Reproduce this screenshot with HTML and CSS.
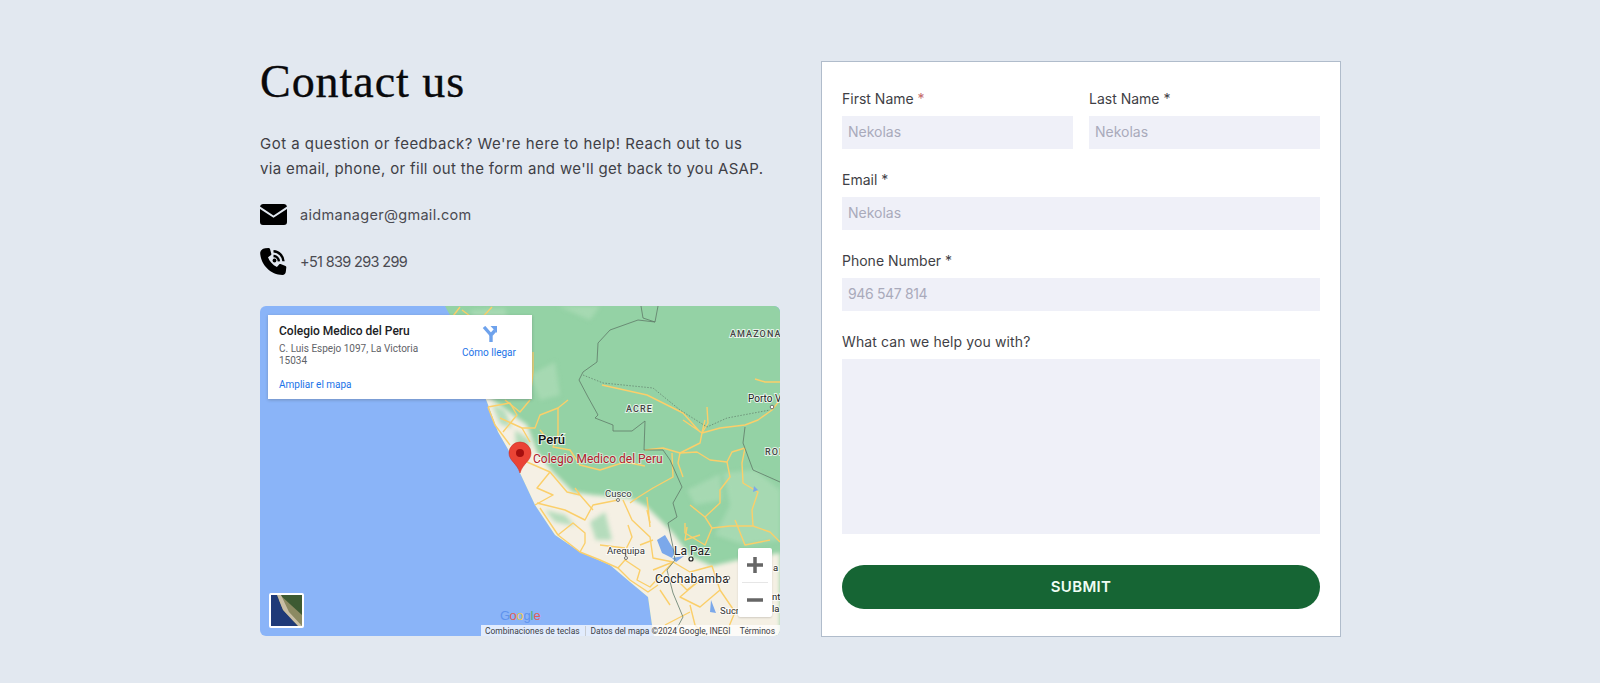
FILE: index.html
```html
<!DOCTYPE html>
<html lang="en">
<head>
<meta charset="utf-8">
<title>Contact us</title>
<link rel="stylesheet" href="styles.css">
</head>
<body>
<main class="page">
  <section class="info">
    <h1 class="title">Contact us</h1>
    <p class="lead"><span class="lead-first">Got a question or feedback? We're here to help! Reach out to us</span><br>via email, phone, or fill out the form and we'll get back to you ASAP.</p>
    <div class="contact">
      <svg class="contact-icon" viewBox="0 0 27 21"><path d="M3 0h21a3 3 0 0 1 3 2.500L13.500 11.500 0 2.500A3 3 0 0 1 3 0z"/><path d="M0 5 13.500 13.800 27 5V18a3 3 0 0 1-3 3H3a3 3 0 0 1-3-3z"/></svg>
      <span class="email">aidmanager@gmail.com</span>
    </div>
    <div class="contact">
      <svg class="contact-icon phone" viewBox="0 0 27 27"><path d="M5.200 0.300 8.600 0c.7 0 1.200.4 1.400 1l1.300 4.800c.2.600 0 1.100-.5 1.500L8 9.300c1.400 4 4.600 7.600 8.900 9.800l2.200-2.700c.4-.5 1-.6 1.500-.4l4.900 2c.6.2.9.8.8 1.400l-.5 4.400C25.700 25.400 24.300 27 22.500 27 10.500 26.600 1 17 .2 5.500 .1 2.800 2.400.6 5.200.3z"/><path class="wave" d="M13.500 3.300c5.500.2 9.700 4.600 10 10M13.500 8c3 .1 5.200 2.500 5.400 5.400"/><circle cx="14.500" cy="12.500" r="1.900"/></svg>
      <span class="tel">+51 839 293 299</span>
    </div>
    <div class="map">
      <svg class="map-art" viewBox="260 306 520 330" preserveAspectRatio="none">
        <defs>
          <clipPath id="land-clip"><path d="M445 306 458 330 470 362 487 402 498 432 517 465 520 473 535 505 555 535 580 552 610 565 630 582 648 597 652 625 654 636H780V306z"/></clipPath>
        </defs>
        <rect class="ocean" x="260" y="306" width="520" height="330"/>
        <path class="land" d="M445 306 458 330 470 362 487 402 498 432 517 465 520 473 535 505 555 535 580 552 610 565 630 582 648 597 652 625 654 636H780V306z"/>
        <g clip-path="url(#land-clip)">
          <path class="pale soft" d="M470 310 505 308 510 330 490 345 478 330zM558 306 590 320 600 306zM530 375 555 362 560 395 540 400zM687 490 720 474 722 500 695 505zM723 473 755 470 780 490V540L745 545 715 535 730 505z"/>
          <path class="sand soft" d="M470 382 490 398 513 415 527 425 537 452 553 472 573 492 593 495 630 498 647 507 673 533 690 556 712 566 738 560 780 553V640H640L600 600 500 470z"/>
          <path class="mottle soft" d="M492 404 505 410 512 428 500 424zM515 430 530 440 528 452 516 446zM545 510 565 515 575 526 555 522zM590 522 605 512 612 540 596 540z"/>
        </g>
        <g class="roads">
          <path d="M602 385 647 395 683 413 700 432M683 420 702 433 700 443 680 453 663 448 645 450M705 420 702 433 720 428 745 425 758 420 772 410 780 400"/>
          <path d="M707 407 708 423 702 433M680 453 697 452 710 460 727 462 732 452 745 448"/>
          <path d="M727 462 730 477 720 490 720 503 705 517 690 505M705 517 712 528 705 545 685 533 685 523"/>
          <path d="M712 528 730 526 753 526 770 532 780 542M745 448 742 463 743 483 758 492 752 510 753 526"/>
          <path d="M680 453 678 463 683 477M672 453 673 477 653 488 637 498 630 503M647 497 650 527"/>
          <path d="M755 379 765 382 780 382M533 352 533 372 530 399"/>
          <path d="M450 320 460 307M462 310 478 322 492 307M512 330 505 345"/>
          <path d="M488 407 510 403 517 415 503 432M500 418 522 428 535 428 540 415 558 408 568 400"/>
          <path d="M558 408 558 435 553 447 570 450 580 465 600 470 625 462 645 466"/>
          <path d="M522 428 530 442M527 462 550 472 537 488 553 495 535 505M550 472 567 492 580 495 593 510M575 488 580 495"/>
          <path d="M488 407 495 425 510 445M505 400 520 412 530 400M540 430 548 440"/>
          <path d="M540 508 558 535 580 552 600 560 618 568 630 580 648 592 658 585"/>
          <path d="M558 535 573 523 585 533 585 543 580 552M537 503 565 510 585 520 593 505 618 500"/>
          <path d="M623 500 632 520 650 537 653 558 673 562M628 525 632 537 627 547 625 560 618 568"/>
          <path d="M625 560 640 570 637 580 650 587 673 562M647 510 650 523M653 570 673 562M600 545 625 548M640 545 653 540"/>
          <path d="M687 527 685 540 700 535M673 562 690 572 712 566 720 590 735 612 725 636M700 580 680 597 700 607 720 590M677 580 687 590 700 580"/>
          <path d="M690 605 695 625 705 636M665 625 690 612M735 520 745 545 770 540M660 590 670 605"/>
        </g>
        <g class="lakes">
          <path d="M657 540 665 535 675 552 672 558 662 553zM672 558 684 556 676 562zM711 600 716 613 710 612zM754 486 758 490 753 492z"/>
        </g>
        <path class="border" d="M641 306 643 318 655 322 638 320 610 330 598 343 597 362 583 372 579 380 588 397 598 415 595 418 613 425 613 431 632 431 645 421 644 450 663 450 670 460 682 487 673 503 677 517 668 523 673 547 675 560 667 570 673 593 683 617 676 630"/>
        <path class="border" d="M745 427 743 443 753 470 780 482M655 322 658 306"/>
        <path class="dotted" d="M583 375 603 383 653 388 680 410 707 427 727 418 770 410"/>
        <g class="labels">
          <text class="place caps" x="730" y="337">AMAZONA</text>
          <text class="place caps" x="626" y="412">ACRE</text>
          <text class="place porto" x="748" y="402">Porto V</text>
          <text class="place caps" x="765" y="455">ROI</text>
          <text class="place big" x="538" y="444">Perú</text>
          <text class="poi" x="533" y="463">Colegio Medico del Peru</text>
          <text class="place" x="605" y="497">Cusco</text>
          <text class="place" x="607" y="554">Arequipa</text>
          <text class="place mid" x="674" y="555">La Paz</text>
          <text class="place mid wide" x="655" y="583">Cochabamba</text>
          <text class="place" x="720" y="614">Sucr</text>
          <text class="place edge" x="773" y="571">a</text>
          <text class="place edge" x="772" y="600">nt</text>
          <text class="place edge" x="772" y="612">la</text>
        </g>
        <circle class="city" cx="691" cy="559" r="2"/>
        <circle class="town" cx="618" cy="500" r="1.500"/>
        <circle class="town" cx="626" cy="558" r="1.500"/>
        <circle class="town" cx="728" cy="578" r="1.800"/>
        <circle class="town" cx="772" cy="407" r="1.800"/>
        <path class="pin" d="M520 473C517 463 509 461 509 453a11 11 0 0 1 22 0C531 461 523 463 520 473z"/>
        <circle class="pin-dot" cx="520" cy="453" r="4"/>
        <g class="logo">
          <text class="g1" x="500" y="620">G</text><text class="g2" x="509.500" y="620">o</text><text class="g3" x="516.500" y="620">o</text><text class="g1" x="523.500" y="620">g</text><text class="g4" x="530.500" y="620">l</text><text class="g2" x="533.500" y="620">e</text>
        </g>
        <g>
          <rect class="thumb-frame" x="269" y="593" width="35" height="35" rx="2"/>
          <rect class="thumb-land" x="271" y="595" width="31" height="31"/>
          <path class="thumb-sand" d="M280 595 302 615V626L290 620 278 602z"/>
          <path class="thumb-sea" d="M271 595H277L283 610 298 626H271z"/>
          <path class="thumb-coast" d="M277 595 283 610 298 626H302L289 612 281 595z"/>
        </g>
      </svg>
      <div class="place-card">
        <div class="place-text">
          <div class="place-name">Colegio Medico del Peru</div>
          <div class="place-addr">C. Luis Espejo 1097, La Victoria 15034</div>
          <div class="place-link">Ampliar el mapa</div>
        </div>
        <div class="directions">
          <svg class="dir-icon" viewBox="0 0 16 16"><path d="M10 16V9L14 4.500"/><path d="M10 9 3 1"/><path class="fill" d="M9.500 0H16V7z"/></svg>
          <span>Cómo llegar</span>
        </div>
      </div>
      <div class="zoom-ctrl">
        <div class="zoom-btn">
          <svg viewBox="0 0 16 16"><path d="M0 8H16M8 0V16"/></svg>
        </div>
        <div class="zoom-sep"></div>
        <div class="zoom-btn">
          <svg viewBox="0 0 16 16"><path d="M0 8H16"/></svg>
        </div>
      </div>
      <div class="attrib">
        <span>Combinaciones de teclas</span><span class="attrib-sep">Datos del mapa ©2024 Google, INEGI</span><span class="attrib-end">Términos</span>
      </div>
    </div>
  </section>
  <form class="card">
    <div class="row">
      <label class="field"><span class="label">First Name <em class="req">*</em></span><input class="input" placeholder="Nekolas"></label>
      <label class="field"><span class="label">Last Name *</span><input class="input" placeholder="Nekolas"></label>
    </div>
    <label class="field"><span class="label">Email *</span><input class="input" placeholder="Nekolas"></label>
    <label class="field"><span class="label">Phone Number *</span><input class="input digits" placeholder="946 547 814"></label>
    <label class="field"><span class="label help">What can we help you with?</span><textarea class="input area"></textarea></label>
    <button class="submit" type="button">SUBMIT</button>
  </form>
</main>
</body>
</html>
```
FILE: styles.css
```css
* { box-sizing: border-box; }
html, body { margin: 0; height: 100%; }
body {
  background: #e2e8f0;
  font-family: Inter, "Open Sans", "Liberation Sans", sans-serif;
  color: #3f3f46;
}
.page {
  display: flex;
  justify-content: center;
  gap: 41px;
  padding-top: 61px;
  padding-left: 1px;
}
.info { width: 520px; display: flex; flex-direction: column; }
.title {
  margin: 1px 0 0;
  font: 400 46px/40px "Liberation Serif", serif;
  letter-spacing: .95px;
  -webkit-text-stroke: .35px #09090b;
  color: #09090b;
  height: 40px;
}
.lead {
  margin: 30px 0 0;
  font-size: 15px;
  line-height: 24.500px;
  letter-spacing: .34px;
  color: #3f3f46;
}
.lead-first { letter-spacing: .47px; }
.contact {
  display: flex;
  align-items: center;
  gap: 13px;
  height: 27px;
  margin-top: 20px;
  font-size: 14.500px;
  color: #4b4b52;
}
.email { letter-spacing: .3px; }
.tel { letter-spacing: -.66px; }
.contact-icon { width: 27px; height: 21px; fill: #000; flex: none; }
.contact-icon.phone { height: 27px; }
.wave { fill: none; stroke: #000; stroke-width: 2.400px; }
.map {
  position: relative;
  width: 520px;
  height: 330px;
  margin-top: 31px;
  border-radius: 6px;
  overflow: hidden;
  font-family: Roboto, sans-serif;
}
.map-art { display: block; width: 100%; height: 100%; }
.ocean { fill: #8ab4f8; }
.land { fill: #94d2a5; }
.sand { fill: #f5f0e4; }
.pale { fill: #a6d9b2; }
.mottle { fill: #b5dcbc; }
.soft { filter: blur(2px); }
.roads path { fill: none; stroke: #fbcf6a; stroke-width: 1.400px; stroke-linejoin: round; }
.lakes path { fill: #7ba8ea; }
.border { fill: none; stroke: #5f7a68; stroke-width: .8px; }
.dotted { fill: none; stroke: #5f7a68; stroke-width: .7px; stroke-dasharray: 1.500 1.500; }
.labels text {
  font-family: Roboto, sans-serif;
  paint-order: stroke;
  stroke: rgba(255, 255, 255, .75);
  stroke-width: 2px;
}
.place { font-size: 9.500px; fill: #333; }
.caps { font-size: 9px; letter-spacing: 1.100px; fill: #444; font-weight: 500; }
.porto { font-size: 10px; fill: #222; }
.big { font-size: 13px; font-weight: 500; fill: #111; }
.mid { font-size: 12px; fill: #222; }
.edge { font-size: 9.500px; fill: #222; }
.wide { letter-spacing: .3px; }
.labels .poi { font-size: 12px; fill: #b3202c; stroke: rgba(255, 255, 255, .5); }
.city { fill: #fff; stroke: #222; stroke-width: 1.200px; }
.town { fill: #fff; stroke: #555; stroke-width: .8px; }
.pin { fill: #ea4335; stroke: #c5221f; stroke-width: .5px; }
.pin-dot { fill: #a50e0e; }
.logo text { font-family: "Liberation Sans", sans-serif; font-size: 13px; }
.g1 { fill: #5f93ee; }
.g2 { fill: #e0605a; }
.g3 { fill: #f0c94e; }
.g4 { fill: #55b06c; }
.thumb-frame { fill: #fff; }
.thumb-land { fill: #3d5a32; }
.thumb-sand { fill: #8c8a62; }
.thumb-sea { fill: #1f3a78; }
.thumb-coast { fill: #c9bea4; }
.place-card {
  position: absolute;
  left: 8px;
  top: 9px;
  width: 264px;
  height: 84px;
  display: flex;
  background: #fff;
  box-shadow: 0 1px 3px rgba(60, 64, 67, .3);
  padding: 9px 10px 8px 11px;
  gap: 4px;
}
.place-text { width: 160px; }
.place-name { font-size: 12px; font-weight: 500; line-height: 15px; color: #202124; }
.place-addr { font-size: 10px; line-height: 12px; color: #5f6368; margin-top: 4px; }
.place-link { font-size: 10px; line-height: 12px; color: #1a73e8; margin-top: 12px; }
.directions {
  flex: 1;
  display: flex;
  flex-direction: column;
  align-items: center;
  padding: 2px 0 0 13px;
  font-size: 10px;
  line-height: 12px;
  color: #1a73e8;
  white-space: nowrap;
}
.dir-icon { width: 16px; height: 16px; margin-bottom: 5px; }
.dir-icon path { fill: none; stroke: #6ea2ec; stroke-width: 3.400px; }
.dir-icon .fill { fill: #6ea2ec; stroke: none; }
.zoom-ctrl {
  position: absolute;
  left: 478px;
  top: 242px;
  width: 34px;
  height: 69px;
  background: #fff;
  border-radius: 2px;
  box-shadow: 0 1px 2px rgba(0, 0, 0, .15);
  display: flex;
  flex-direction: column;
  align-items: center;
}
.zoom-btn { flex: 1; display: flex; align-items: center; justify-content: center; }
.zoom-btn svg { width: 16px; height: 16px; }
.zoom-btn path { fill: none; stroke: #666; stroke-width: 3.500px; }
.zoom-sep { width: 26px; height: 1px; background: #e6e6e6; flex: none; }
.attrib {
  position: absolute;
  right: 0;
  bottom: 0;
  width: 299px;
  height: 11px;
  display: flex;
  align-items: center;
  gap: 5px;
  padding: 0 5px 0 4px;
  background: rgba(255, 255, 255, .75);
  font-size: 8.450px;
  color: #3c4043;
  white-space: nowrap;
}
.attrib-sep { border-left: 1px solid #c8ccd2; padding-left: 5px; }
.attrib-end { margin-left: auto; }
.card {
  width: 520px;
  height: 576px;
  background: #fff;
  border: 1px solid #b0bccb;
  padding: 26px 20px;
  display: flex;
  flex-direction: column;
  gap: 20px;
}
.row { display: grid; grid-template-columns: 1fr 1fr; gap: 16px; }
.field { display: flex; flex-direction: column; }
.label { font-size: 14px; line-height: 20px; color: #3f3f46; padding-top: 1px; margin-bottom: 7px; }
.help { letter-spacing: .12px; }
.req { font-style: normal; color: #c46a6a; }
.input {
  display: block;
  width: 100%;
  height: 33px;
  padding: 0 6px 2px;
  background: #eff0f8;
  border: 0;
  border-radius: 0;
  font: 14px Inter, "Open Sans", sans-serif;
  color: #3f3f46;
  outline: 0;
}
.digits { letter-spacing: -.35px; }
.input::placeholder { color: #a9aabb; opacity: 1; }
.area { height: 175px; resize: none; }
.submit {
  height: 44px;
  margin-top: 11px;
  padding-bottom: 2px;
  border: 0;
  border-radius: 22px;
  background: #166534;
  color: #f0fdf4;
  font: 600 15px Inter, sans-serif;
  letter-spacing: .3px;
}
```
